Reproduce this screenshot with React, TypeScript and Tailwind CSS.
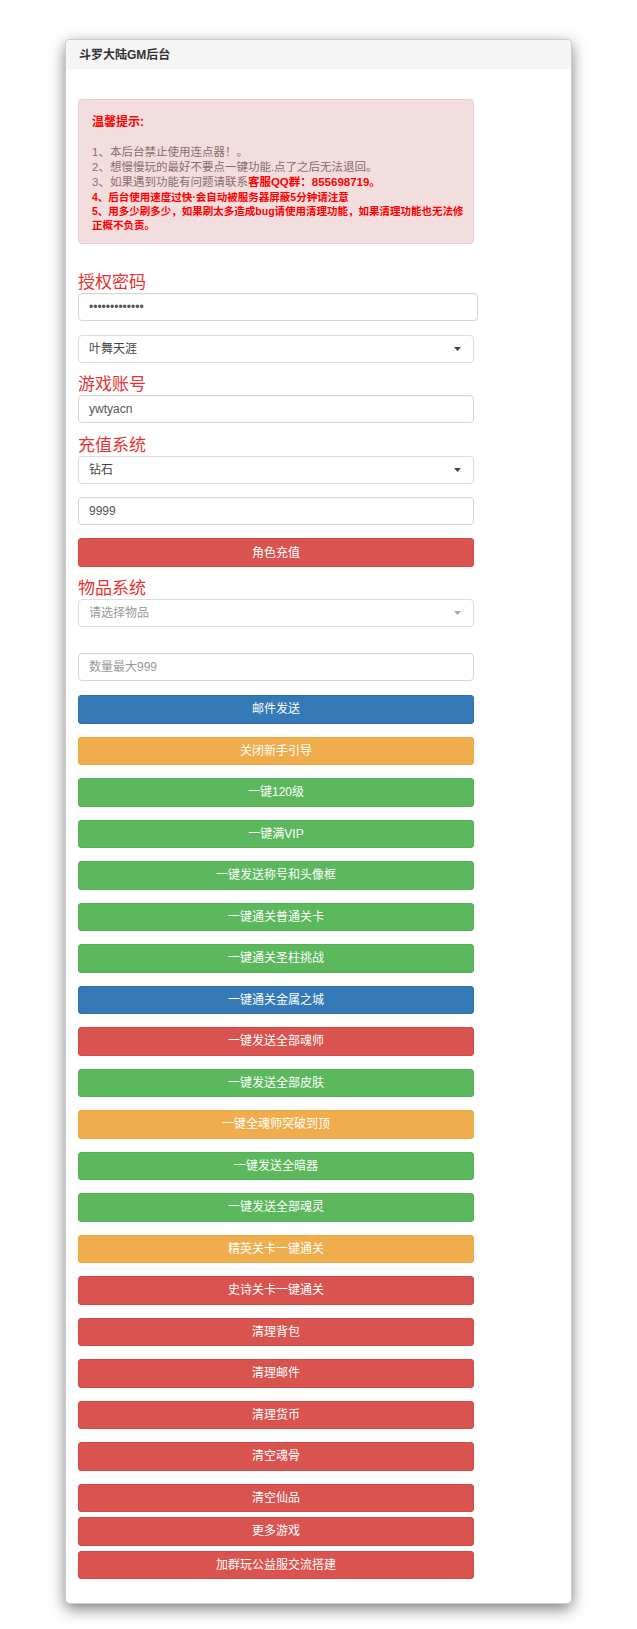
import React from 'react';

type Tone = 'primary' | 'warning' | 'success' | 'danger';

const toneClass: Record<Tone, string> = {
    primary: 'bg-[#337ab7] border-[#3070aa]',
    warning: 'bg-[#f0ad4e] border-[#eea63f]',
    success: 'bg-[#5cb85c] border-[#55b055]',
    danger: 'bg-[#d9534f] border-[#d54a46]',
};

const actions: { label: string; tone: Tone }[] = [
    { label: '邮件发送', tone: 'primary' },
    { label: '关闭新手引导', tone: 'warning' },
    { label: '一键120级', tone: 'success' },
    { label: '一键满VIP', tone: 'success' },
    { label: '一键发送称号和头像框', tone: 'success' },
    { label: '一键通关普通关卡', tone: 'success' },
    { label: '一键通关圣柱挑战', tone: 'success' },
    { label: '一键通关金属之城', tone: 'primary' },
    { label: '一键发送全部魂师', tone: 'danger' },
    { label: '一键发送全部皮肤', tone: 'success' },
    { label: '一键全魂师突破到顶', tone: 'warning' },
    { label: '一键发送全暗器', tone: 'success' },
    { label: '一键发送全部魂灵', tone: 'success' },
    { label: '精英关卡一键通关', tone: 'warning' },
    { label: '史诗关卡一键通关', tone: 'danger' },
    { label: '清理背包', tone: 'danger' },
    { label: '清理邮件', tone: 'danger' },
    { label: '清理货币', tone: 'danger' },
    { label: '清空魂骨', tone: 'danger' },
    { label: '清空仙品', tone: 'danger' },
];

function Btn({ label, tone, className = '' }: { label: string; tone: Tone; className?: string }) {
    return (
        <button
            className={`w-full h-[28.5px] rounded-[3px] border text-white text-[12px] leading-none ${toneClass[tone]} ${className}`}
        >
            {label}
        </button>
    );
}

function Label({ children, className = '' }: { children: React.ReactNode; className?: string }) {
    return <div className={`h-[20px] leading-[20px] text-[17px] text-[#e53333] ${className}`}>{children}</div>;
}

function Field({ value, placeholder, className = '', type = 'text' }: { value?: string; placeholder?: string; className?: string; type?: string }) {
    return (
        <input
            type={type}
            defaultValue={value}
            placeholder={placeholder}
            readOnly
            className={`block h-[28px] w-[396px] rounded-[4px] border border-[#d6d6d6] bg-white px-[10px] text-[12px] text-[#555] placeholder:text-[#999] outline-none shadow-[inset_0_1px_1px_rgba(0,0,0,0.05)] ${className}`}
        />
    );
}

function Select({ value, muted = false, className = '' }: { value: string; muted?: boolean; className?: string }) {
    return (
        <div className={`flex h-[28px] w-[396px] items-center justify-between rounded-[4px] border border-[#dcdcdc] bg-white pl-[10px] pr-[12px] text-[12px] ${muted ? 'text-[#999]' : 'text-[#444]'} ${className}`}>
            <span>{value}</span>
            <svg width="7" height="4" viewBox="0 0 7 4">
                <path d="M0 0h7L3.5 4z" fill={muted ? '#aaa' : '#444'} />
            </svg>
        </div>
    );
}

export default function App() {
    return (
        <main className="min-h-[1629px] bg-white pt-[39px] font-['Liberation_Sans','Noto_Sans_CJK_SC',sans-serif]">
            <div className="mx-auto w-[507px] rounded-[5px] border border-black/20 bg-white shadow-[0_5px_15px_rgba(0,0,0,0.5)]">
                {/* Header */}
                <div className="flex h-[29px] items-center rounded-t-[5px] bg-[#f5f5f5] px-[13px] text-[12px] font-bold text-[#333]">
                    斗罗大陆GM后台
                </div>

                <div className="px-[12px] pt-[30px] pb-[24px]">
                    {/* Notice */}
                    <div className="w-[396px] rounded-[4px] border border-[#ebccd1] bg-[#f2dede] px-[13px] pt-[15px] pb-[11px]">
                        <p className="text-[12px] leading-[15px] font-bold text-[#ff0000]">温馨提示:</p>
                        <div className="h-[15px]"></div>
                        <p className="text-[11.5px] leading-[15px] text-[#8f6a6a]">1、本后台禁止使用连点器！。</p>
                        <p className="text-[11.5px] leading-[15px] text-[#8f6a6a]">2、想慢慢玩的最好不要点一键功能.点了之后无法退回。</p>
                        <p className="text-[11.5px] leading-[15px] text-[#8f6a6a]">
                            3、如果遇到功能有问题请联系<span className="text-[11.5px] font-bold text-[#ff0000]">客服QQ群：855698719。</span>
                        </p>
                        <p className="text-[10.5px] leading-[14px] font-bold text-[#ff0000]">4、后台使用速度过快·会自动被服务器屏蔽5分钟请注意</p>
                        <p className="text-[10.5px] leading-[14px] font-bold text-[#ff0000] whitespace-nowrap">
                            5、用多少刷多少，如果刷太多造成bug请使用清理功能，如果清理功能也无法修
                            <br />
                            正概不负责。
                        </p>
                    </div>

                    {/* Auth */}
                    <Label className="mt-[29px]">授权密码</Label>
                    <Field type="password" value="1234567890123" className="w-[400px]" />
                    <Select value="叶舞天涯" className="mt-[14px]" />

                    <Label className="mt-[12px]">游戏账号</Label>
                    <Field value="ywtyacn" />

                    {/* Recharge */}
                    <Label className="mt-[13px]">充值系统</Label>
                    <Select value="钻石" />
                    <Field value="9999" className="mt-[13px]" />
                    <div className="mt-[13px] w-[396px]">
                        <button className="h-[29px] w-full rounded-[3px] border border-[#d54a46] bg-[#d9534f] text-[12px] text-white">角色充值</button>
                    </div>

                    {/* Items */}
                    <Label className="mt-[12px]">物品系统</Label>
                    <Select value="请选择物品" muted />
                    <Field placeholder="数量最大999" className="mt-[26px]" />

                    <div className="mt-[14px] flex w-[396px] flex-col gap-[13px]">
                        {actions.map((a) => (
                            <Btn key={a.label} label={a.label} tone={a.tone} />
                        ))}
                    </div>
                    <div className="mt-[5px] flex w-[396px] flex-col gap-[5px]">
                        <Btn label="更多游戏" tone="danger" />
                        <Btn label="加群玩公益服交流搭建" tone="danger" />
                    </div>
                </div>
            </div>
        </main>
    );
}
